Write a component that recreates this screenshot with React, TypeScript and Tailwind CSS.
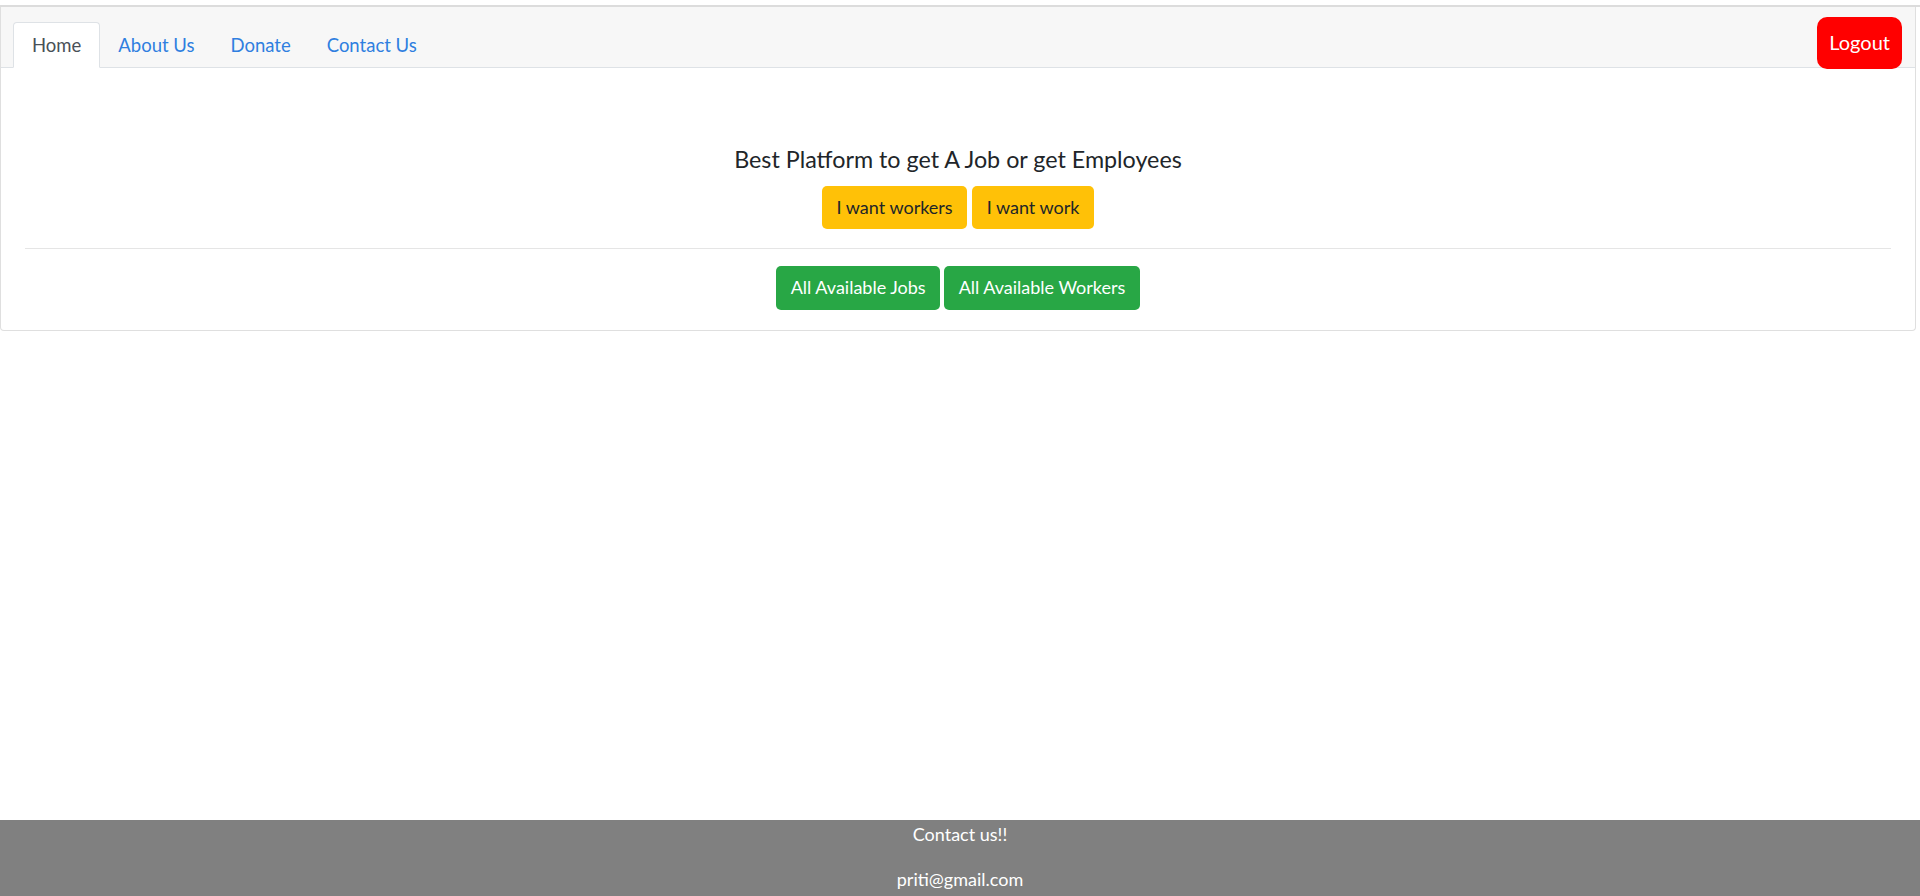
import React from 'react';

const TABS = ['Home', 'About Us', 'Donate', 'Contact Us'];

export default function App() {
  return (
    <div className="h-screen flex flex-col bg-white overflow-hidden text-[18px] leading-[29.4px] text-[#212529]" style={{ fontFamily: 'Lato, "Noto Sans", sans-serif' }}>
      <div className="mt-[5px] h-[2px] bg-[#dcdcdc]" />

      <div className="mr-[4px] border border-t-0 border-[#dfdfdf] rounded-b-[4px]">
        <div className="flex items-start justify-between bg-[#f7f7f7] border-b border-[#dee2e6] pl-[12px] pr-[13px] pt-[15px]">
          <ul className="flex -mb-px text-[18.5px]">
            {TABS.map((t, i) => (
              <li key={t}>
                <a
                  href="#"
                  className={
                    i === 0
                      ? 'block px-[18px] py-[7.5px] border border-[#dee2e6] border-b-white bg-white rounded-t-[4px] text-[#495057]'
                      : 'block px-[17px] py-[7.5px] border border-transparent text-[#2f7fe0]'
                  }
                >
                  {t}
                </a>
              </li>
            ))}
          </ul>
          <button className="relative -mt-[5px] -mb-[7px] h-[52px] px-[12px] rounded-[10px] bg-[#ff0000] text-white text-[20px]">
            Logout
          </button>
        </div>

        <div className="px-[24px] pt-[77px] pb-[20px] text-center">
          <h5 className="text-[23.3px] leading-[29.4px] mb-[11px]">Best Platform to get A Job or get Employees</h5>
          <div className="flex justify-center gap-[5px]">
            <button className="px-[14.5px] py-[7px] rounded-[5px] bg-[#ffc107] text-[#212529]">I want workers</button>
            <button className="px-[14.5px] py-[7px] rounded-[5px] bg-[#ffc107] text-[#212529]">I want work</button>
          </div>
          <hr className="mt-[19px] mb-[17px] border-t border-[#e5e5e5]" />
          <div className="flex justify-center gap-[4px]">
            <button className="px-[14.5px] py-[7px] rounded-[5px] bg-[#28a745] text-white">All Available Jobs</button>
            <button className="px-[14.5px] py-[7px] rounded-[5px] bg-[#28a745] text-white">All Available Workers</button>
          </div>
        </div>
      </div>

      <div className="flex-1" />

      <footer className="h-[76px] bg-[#808080] text-white text-center">
        <p className="mb-[16px]">Contact us!!</p>
        <p>priti@gmail.com</p>
      </footer>
    </div>
  );
}
